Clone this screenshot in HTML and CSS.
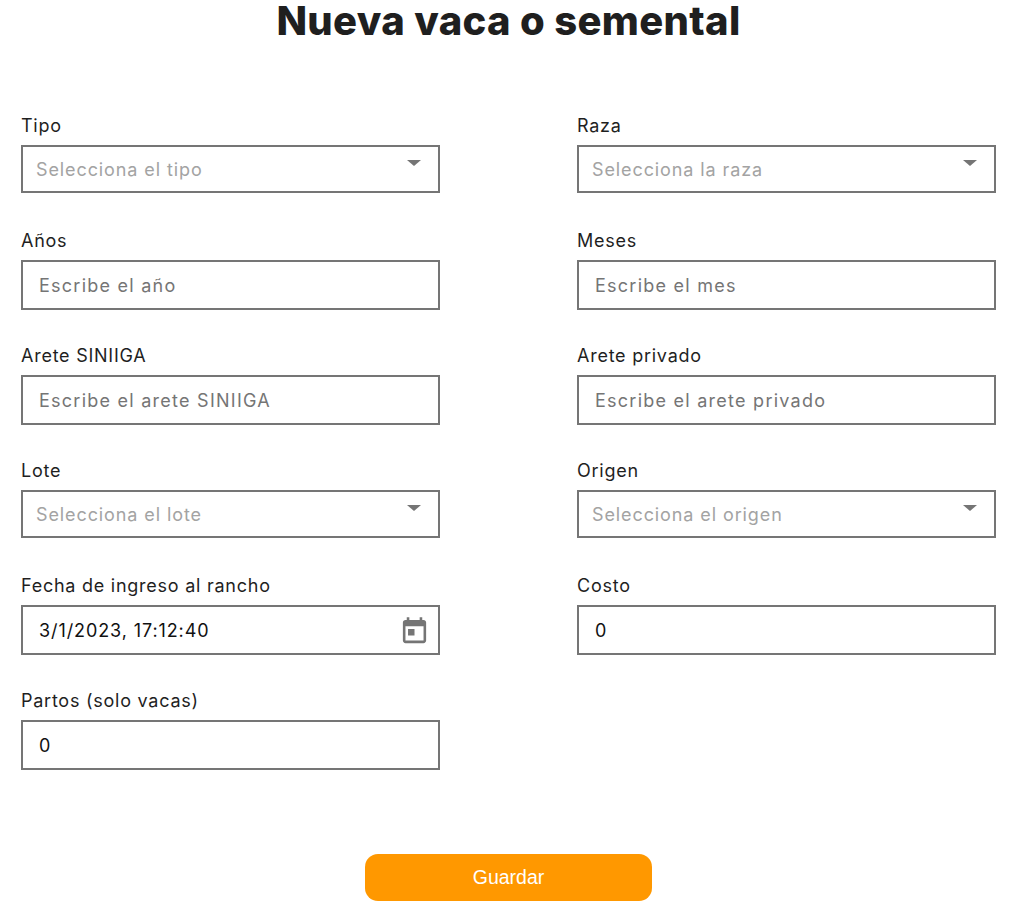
FILE: index.html
```html
<!DOCTYPE html>
<html lang="es">
<head>
    <meta charset="UTF-8">
    <meta name="viewport" content="width=device-width, initial-scale=1.0">
    <title>Nueva vaca o semental</title>
    <link rel="stylesheet" href="styles.css">
</head>
<body>

<h1>Nueva vaca o semental</h1>

<form class="form-grid">
    <div class="form-group">
        <label for="tipo">Tipo</label>
        <div class="select-box">
            <select id="tipo"><option>Selecciona el tipo</option></select>
        </div>
    </div>
    <div class="form-group">
        <label for="raza">Raza</label>
        <div class="select-box">
            <select id="raza"><option>Selecciona la raza</option></select>
        </div>
    </div>

    <div class="form-group">
        <label for="anios">Años</label>
        <input type="text" id="anios" placeholder="Escribe el año">
    </div>
    <div class="form-group">
        <label for="meses">Meses</label>
        <input type="text" id="meses" placeholder="Escribe el mes">
    </div>

    <div class="form-group">
        <label for="siniiga">Arete SINIIGA</label>
        <input type="text" id="siniiga" placeholder="Escribe el arete SINIIGA">
    </div>
    <div class="form-group">
        <label for="privado">Arete privado</label>
        <input type="text" id="privado" placeholder="Escribe el arete privado">
    </div>

    <div class="form-group">
        <label for="lote">Lote</label>
        <div class="select-box">
            <select id="lote"><option>Selecciona el lote</option></select>
        </div>
    </div>
    <div class="form-group">
        <label for="origen">Origen</label>
        <div class="select-box">
            <select id="origen"><option>Selecciona el origen</option></select>
        </div>
    </div>

    <div class="form-group">
        <label for="fecha">Fecha de ingreso al rancho</label>
        <div class="date-box">
            <input type="text" id="fecha" value="3/1/2023, 17:12:40">
            <svg class="date-icon" viewBox="0 0 24 24" aria-hidden="true">
                <path d="M7 10h5v5H7zM16 1v2H8V1H6v2H5C3.89 3 3.01 3.9 3.01 5L3 19c0 1.1.89 2 2 2h14c1.1 0 2-.9 2-2V5c0-1.1-.9-2-2-2h-1V1h-2zm3 18H5V8h14v11z"/>
            </svg>
        </div>
    </div>
    <div class="form-group">
        <label for="costo">Costo</label>
        <input type="text" id="costo" value="0">
    </div>

    <div class="form-group">
        <label for="partos">Partos (solo vacas)</label>
        <input type="text" id="partos" value="0">
    </div>
</form>

<div class="actions">
    <button type="button">Guardar</button>
</div>

</body>
</html>
```

FILE: styles.css
```css
body {
    font-family: 'Inter', 'Liberation Sans', sans-serif;
    margin: 0;
    padding: 0 28px 0 21px;
    background-color: #fff;
    color: #1f1f1f;
}
h1 {
    margin: 0;
    font-size: 40px;
    line-height: 42px;
    font-weight: 800;
    letter-spacing: 0.33px;
    text-align: center;
    color: #1f1f1f;
}
.form-grid {
    display: grid;
    grid-template-columns: 419px 419px;
    grid-auto-rows: 81px;
    justify-content: space-between;
    row-gap: 34px;
    margin-top: 72px;
}
.form-group label {
    display: block;
    height: 22px;
    margin-bottom: 9px;
    font-size: 18px;
    line-height: 24px;
    letter-spacing: 0.75px;
}
.form-group input,
.form-group select {
    display: block;
    width: 100%;
    box-sizing: border-box;
    border: 2px solid #757575;
    border-radius: 0;
    background-color: #fff;
    font-family: inherit;
    font-size: 18px;
    outline: none;
}
.form-group input {
    height: 50px;
    padding: 0 16px;
    color: #111;
    letter-spacing: 0.9px;
}
.form-group input::placeholder {
    color: #757575;
    opacity: 1;
    letter-spacing: 1.25px;
}
.form-group select {
    height: 48px;
    padding: 0 13px;
    color: #a3a3a3;
    letter-spacing: 0.9px;
    appearance: none;
}
.select-box,
.date-box {
    position: relative;
}
.select-box::after {
    content: "";
    position: absolute;
    top: 15px;
    right: 19.5px;
    border-style: solid;
    border-width: 6px 7px 0;
    border-color: #757575 transparent transparent;
}
.date-icon {
    position: absolute;
    top: 11px;
    right: 10px;
    width: 31px;
    height: 31px;
    fill: #757575;
}
.actions {
    display: flex;
    justify-content: center;
    margin-top: 84px;
}
.actions button {
    width: 287px;
    height: 47px;
    border: none;
    border-radius: 13px;
    background-color: #ff9800;
    color: #fff;
    font-family: 'Liberation Sans', sans-serif;
    font-size: 19.5px;
    cursor: pointer;
}
```
